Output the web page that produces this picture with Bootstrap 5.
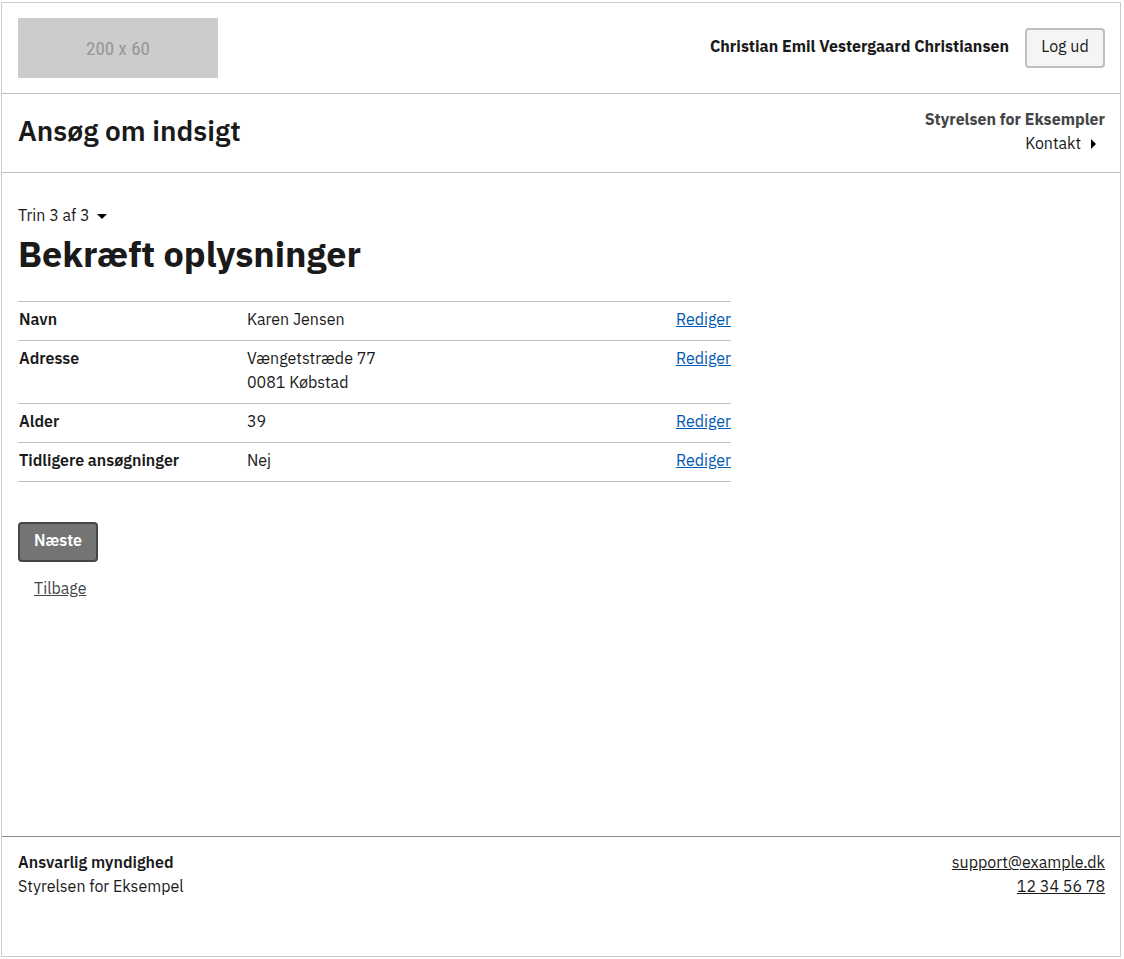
<!DOCTYPE html>
<html lang="da">
<head>
<meta charset="utf-8">
<meta name="viewport" content="width=device-width, initial-scale=1">
<title>Ansøg om indsigt</title>
<link href="https://cdn.jsdelivr.net/npm/bootstrap@5.3.0/dist/css/bootstrap.min.css" rel="stylesheet">
<style>
body{font-family:"IBM Plex Sans",Roboto,sans-serif;font-size:16px;line-height:24px;color:#1a1a1a;background:#fff;padding:2px 3px 2px 1px}
.page-frame{min-height:calc(100vh - 4px);border:1px solid #ccc}
.bar{padding-left:16px;padding-right:15px}
.rule-below{border-bottom:1px solid #bfbfbf}
.logo-box{width:200px;height:60px;padding-top:2px;background:#ccc;color:#969696;font-family:"Roboto Condensed",Roboto,sans-serif;font-size:19px}
.site-header{min-height:91px}
.solution-header{min-height:79px;padding-bottom:4px}
.user-name,.authority{font-weight:700}
.user-name{padding-bottom:4px}
.authority{color:#454545}
.site-title{font-size:28px;line-height:36px;font-weight:600}
.step-title{font-size:36px;line-height:44px;font-weight:700;margin:5px 0 25px}
.action{min-width:80px;height:40px;padding:0 14px 4px;border:2px solid #bfbfbf;border-radius:4px;line-height:24px}
.action-light{background:#f5f5f5;color:#1a1a1a}
.action-main{background:#747474;border-color:#454545;color:#fff;font-weight:600}
.plain{color:#1a1a1a;text-decoration:none}
.arrow-slot{width:24px;height:24px}
.step-nav{padding-top:30px}
.step-button{border:0;background:none;padding:0;color:#1a1a1a}
.summary{max-width:713px;border-top:1px solid #bfbfbf}
.summary th,.summary td{padding:5px 0 9px;border-bottom:1px solid #bfbfbf;vertical-align:top;font-weight:400}
.summary th{width:229px;padding-left:1px;font-weight:600}
.summary a{color:#0059b3}
.actions{margin-top:40px}
.back-link{color:#454545;margin:14px 16px}
.site-footer{min-height:120px;padding-top:13px;border-top:1px solid #8c8c8c}
.site-footer a{color:#1a1a1a}
.footer-title{font-weight:600}
</style>
<script src="https://cdn.jsdelivr.net/npm/bootstrap@5.3.0/dist/js/bootstrap.bundle.min.js"></script>
</head>
<body>
<div class="page-frame d-flex flex-column">
  <header>
    <div class="site-header bar rule-below d-flex flex-wrap align-items-center justify-content-between">
      <div class="logo-box d-flex align-items-center justify-content-center">200 x 60</div>
      <div class="d-flex align-items-center gap-3">
        <span class="user-name">Christian Emil Vestergaard Christiansen</span>
        <button class="action action-light" type="button">Log ud</button>
      </div>
    </div>
    <div class="solution-header bar rule-below d-flex flex-wrap align-items-center justify-content-between">
      <div class="site-title">Ansøg om indsigt</div>
      <div class="d-flex flex-column align-items-end">
        <div class="authority">Styrelsen for Eksempler</div>
        <a class="plain d-flex align-items-center" href="#">Kontakt
          <svg class="arrow-slot" viewBox="0 0 24 24" aria-hidden="true"><path d="M10 8v10l5-5z"/></svg>
        </a>
      </div>
    </div>
  </header>
  <main class="bar flex-grow-1">
    <div class="step-nav">
      <button class="step-button d-flex align-items-center" type="button">Trin 3 af 3
        <svg class="arrow-slot" viewBox="0 0 24 24" aria-hidden="true"><path d="M7 11h10l-5 5z"/></svg>
      </button>
    </div>
    <h1 class="step-title">Bekræft oplysninger</h1>
    <table class="summary w-100">
      <tbody>
        <tr><th scope="row">Navn</th><td>Karen Jensen</td><td class="text-end"><a href="#">Rediger</a></td></tr>
        <tr><th scope="row">Adresse</th><td>Vængetstræde 77<br>0081 Købstad</td><td class="text-end"><a href="#">Rediger</a></td></tr>
        <tr><th scope="row">Alder</th><td>39</td><td class="text-end"><a href="#">Rediger</a></td></tr>
        <tr><th scope="row">Tidligere ansøgninger</th><td>Nej</td><td class="text-end"><a href="#">Rediger</a></td></tr>
      </tbody>
    </table>
    <div class="actions d-flex flex-column align-items-start">
      <button class="action action-main" type="button">Næste</button>
      <a class="back-link" href="#">Tilbage</a>
    </div>
  </main>
  <footer class="site-footer bar d-flex flex-wrap justify-content-between">
    <div><div class="footer-title">Ansvarlig myndighed</div><div>Styrelsen for Eksempel</div></div>
    <div class="d-flex flex-column align-items-end">
      <a href="mailto:support@example.dk">support@example.dk</a>
      <a href="tel:12345678">12 34 56 78</a>
    </div>
  </footer>
</div>
</body>
</html>
